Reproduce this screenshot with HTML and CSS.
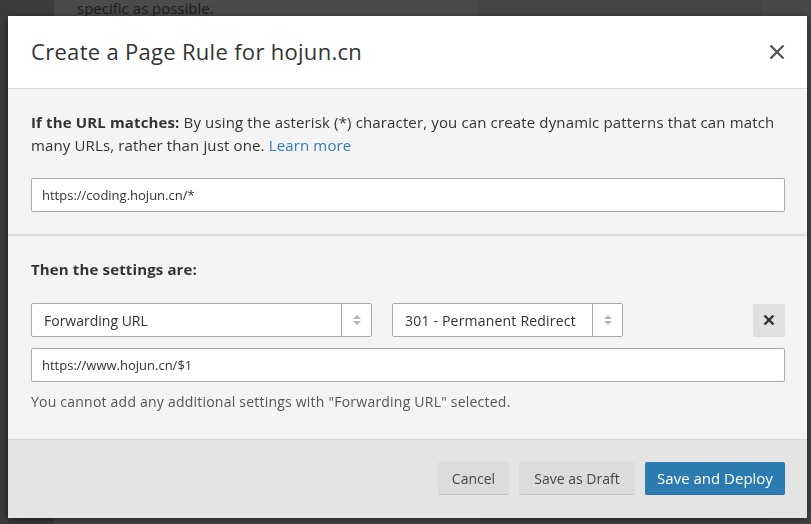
FILE: index.html
```html
<!DOCTYPE html>
<html>
<head>
<meta charset="utf-8">
<link rel="stylesheet" href="styles.css">
</head>
<body>
<div class="page">
  <div class="col col-a"></div>
  <div class="col col-b"><p class="bg-text">specific as possible.</p></div>
  <div class="col col-c"></div>
  <div class="col col-d"></div>
</div>

<div class="modal">
  <div class="modal-header">
    <h2 class="modal-title">Create a Page Rule for hojun.cn</h2>
    <button class="close" aria-label="Close">
      <svg width="16" height="16" viewBox="0 0 16 16"><path d="M1.5 1.5 L14.5 14.5 M14.5 1.5 L1.5 14.5" stroke="#555" stroke-width="2.4" fill="none"/></svg>
    </button>
  </div>

  <div class="section">
    <p class="text"><strong>If the URL matches:</strong> By using the asterisk (*) character, you can create dynamic patterns that can match many URLs, rather than just one. <a class="link" href="#">Learn more</a></p>
    <div class="input">https://coding.hojun.cn/*</div>
  </div>

  <div class="section section-2">
    <p class="text"><strong>Then the settings are:</strong></p>
    <div class="setting-row">
      <div class="select select-1">
        <span class="select-value">Forwarding URL</span>
        <span class="select-arrow"><span class="up"></span><span class="down"></span></span>
      </div>
      <div class="select select-2">
        <span class="select-value">301 - Permanent Redirect</span>
        <span class="select-arrow"><span class="up"></span><span class="down"></span></span>
      </div>
      <button class="remove" aria-label="Remove">
        <svg width="12" height="12" viewBox="0 0 12 12"><path d="M1.5 1.5 L10.5 10.5 M10.5 1.5 L1.5 10.5" stroke="#333" stroke-width="2.4" fill="none"/></svg>
      </button>
    </div>
    <div class="input input-2">https://www.hojun.cn/$1</div>
    <p class="note">You cannot add any additional settings with "Forwarding URL" selected.</p>
  </div>

  <div class="modal-footer">
    <button class="btn btn-cancel">Cancel</button>
    <button class="btn btn-draft">Save as Draft</button>
    <button class="btn btn-primary">Save and Deploy</button>
  </div>
</div>
</body>
</html>
```

FILE: styles.css
```css
* { box-sizing: border-box; }
html, body { margin: 0; padding: 0; }
body {
  width: 811px;
  height: 524px;
  overflow: hidden;
  background: #3c3c3c;
  font-family: "Open Sans", "Noto Sans", sans-serif;
}
.page {
  display: flex;
  height: 524px;
}
.col { height: 100%; }
.col-a { width: 54px; background: #3c3c3c; }
.col-b { width: 425px; background: #4a4a4a; }
.col-c { width: 283px; background: #444444; }
.col-d { flex: 1; background: #474747; }
.bg-text {
  margin: 0;
  padding: 0 0 0 23px;
  font-size: 15px;
  line-height: 16px;
  color: #1e1e1e;
}

.modal {
  position: fixed;
  left: 8px;
  top: 16px;
  width: 799px;
  height: 502px;
  background: #f4f4f4;
  box-shadow: 0 2px 8px rgba(0,0,0,0.55);
  display: flex;
  flex-direction: column;
}
.modal-header {
  height: 73px;
  background: #ffffff;
  border-bottom: 1px solid #dcdcdc;
  display: flex;
  align-items: center;
  justify-content: space-between;
  padding: 0 22px 0 23px;
}
.modal-title {
  margin: 0;
  font-size: 22px;
  font-weight: 400;
  color: #333;
  letter-spacing: 0.3px;
  padding-bottom: 2px;
}
.close {
  border: 0;
  background: none;
  padding: 0;
  width: 16px;
  height: 16px;
  display: flex;
}
.section {
  padding: 22px 22px 22px 23px;
  border-bottom: 2px solid #dddddd;
}
.section-2 {
  border-bottom: 1px solid #d8d8d8;
  flex: 1;
  padding-bottom: 0;
}
.text {
  margin: 0;
  font-size: 15px;
  line-height: 23px;
  color: #333;
  letter-spacing: 0.14px;
}
.text strong { font-weight: 700; color: #333; }
.link { color: #2f7bbf; text-decoration: none; }
.input {
  margin-top: 21px;
  height: 34px;
  background: #fff;
  border: 1px solid #a9a9a9;
  border-radius: 2px;
  padding: 0 10px;
  display: flex;
  align-items: center;
  font-size: 13px;
  color: #333;
}
.setting-row {
  margin-top: 22px;
  display: flex;
  align-items: center;
}
.select {
  height: 34px;
  background: #fff;
  border: 1px solid #a9a9a9;
  border-radius: 2px;
  display: flex;
  align-items: stretch;
  font-size: 14px;
  color: #333;
}
.select-1 { width: 341px; }
.select-2 { width: 231px; margin-left: 20px; letter-spacing: 0.2px; }
.select-value {
  flex: 1;
  display: flex;
  align-items: center;
  padding-left: 12px;
}
.select-arrow {
  width: 30px;
  border-left: 1px solid #a9a9a9;
  display: flex;
  flex-direction: column;
  align-items: center;
  justify-content: center;
  gap: 2px;
}
.up, .down {
  width: 0;
  height: 0;
  border-left: 4px solid transparent;
  border-right: 4px solid transparent;
}
.up { border-bottom: 4px solid #b5b5b5; }
.down { border-top: 4px solid #b5b5b5; }
.remove {
  margin-left: auto;
  width: 32px;
  height: 33px;
  background: #e0e0e0;
  border: 0;
  border-radius: 2px;
  display: flex;
  align-items: center;
  justify-content: center;
  padding: 0;
}
.input-2 { margin-top: 11px; }
.note {
  margin: 9px 0 0;
  font-size: 14px;
  line-height: 21px;
  color: #555;
  letter-spacing: 0.22px;
}
.modal-footer {
  height: 78px;
  background: #e4e4e4;
  display: flex;
  justify-content: flex-end;
  align-items: flex-start;
  padding: 22px 22px 0 0;
  gap: 10px;
}
.btn {
  height: 33px;
  border: 0;
  border-bottom: 1px solid #c6c6c6;
  border-radius: 2px;
  background: #dcdcdc;
  color: #444;
  font-family: "Open Sans", "Noto Sans", sans-serif;
  font-size: 14px;
  padding: 0;
  white-space: nowrap;
}
.btn-cancel { width: 71px; }
.btn-draft { width: 116px; }
.btn-primary {
  width: 140px;
  background: #2c7bb0;
  border-bottom-color: #2a6f9e;
  color: #fff;
  font-size: 15px;
}
```
